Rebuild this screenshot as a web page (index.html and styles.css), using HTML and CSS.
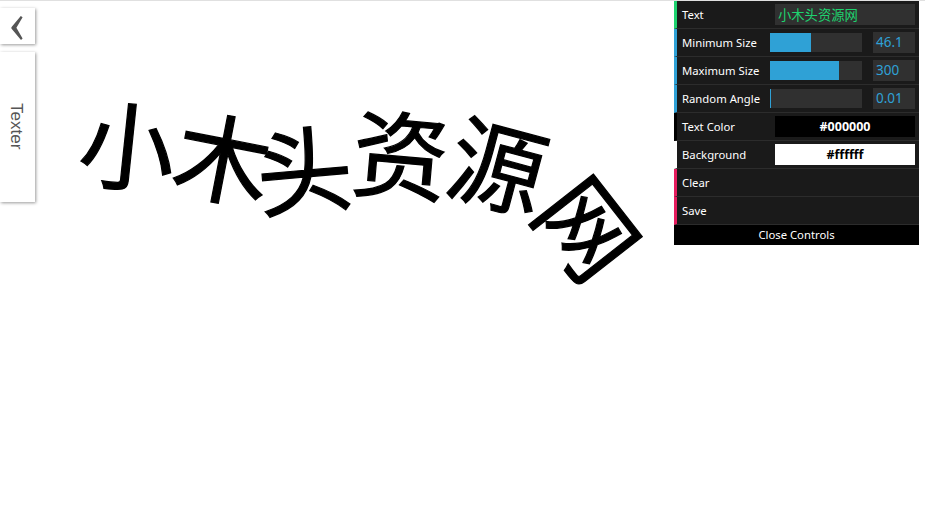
FILE: index.html
```html
<!DOCTYPE html>
<html lang="zh">
<head>
<meta charset="utf-8">
<title>Texter</title>
<link rel="stylesheet" href="styles.css">
</head>
<body>
<div class="side">
  <button class="back" type="button" aria-label="Back">
    <svg class="chev" width="12" height="24" viewBox="0 0 12 24"><path d="M9.8 0 L11.6 1.2 L5.4 11.8 L11.6 22.6 L10 24 L0.4 12.6 L0.4 11.2 Z" fill="#555"/></svg>
  </button>
  <div class="tab"><span class="tab-label">Texter</span></div>
</div>
<div class="canvas">
  <span class="g g1">小</span>
  <span class="g g2">木</span>
  <span class="g g3">头</span>
  <span class="g g4">资</span>
  <span class="g g5">源</span>
  <span class="g g6">网</span>
</div>
<div class="gui">
  <div class="row string">
    <span class="label">Text</span>
    <div class="value text-value">小木头资源网</div>
  </div>
  <div class="row number">
    <span class="label">Minimum Size</span>
    <div class="slider"><div class="fill fill-min"></div></div>
    <div class="num">46.1</div>
  </div>
  <div class="row number">
    <span class="label">Maximum Size</span>
    <div class="slider"><div class="fill fill-max"></div></div>
    <div class="num">300</div>
  </div>
  <div class="row number">
    <span class="label">Random Angle</span>
    <div class="slider"><div class="fill fill-ang"></div></div>
    <div class="num">0.01</div>
  </div>
  <div class="row color-black">
    <span class="label">Text Color</span>
    <div class="value swatch swatch-black">#000000</div>
  </div>
  <div class="row color-white">
    <span class="label">Background</span>
    <div class="value swatch swatch-white">#ffffff</div>
  </div>
  <div class="row action"><span class="label">Clear</span></div>
  <div class="row action"><span class="label">Save</span></div>
  <div class="close">Close Controls</div>
</div>
</body>
</html>
```
FILE: styles.css
```css
html, body { margin: 0; padding: 0; }
body {
  width: 925px;
  height: 516px;
  overflow: hidden;
  background: #fff;
  border-top: 1px solid #e0e0e0;
  box-sizing: border-box;
  position: relative;
  font-family: "Noto Sans", "Open Sans", sans-serif;
}
.side {
  display: flex;
  flex-direction: column;
  gap: 8px;
  width: 35px;
  padding-top: 7px;
}
.back {
  display: flex;
  align-items: center;
  justify-content: center;
  width: 35px;
  height: 36px;
  padding: 0;
  border: 0;
  background: #fff;
  box-shadow: 1px 1px 3px rgba(0,0,0,.4);
}
.chev { margin: 3px 1px 0 0; }
.tab {
  display: flex;
  align-items: center;
  justify-content: center;
  height: 150px;
  background: #fff;
  box-shadow: 1px 1px 3px rgba(0,0,0,.4);
}
.tab-label {
  writing-mode: vertical-rl;
  font-family: "Liberation Sans", Arial, sans-serif;
  font-size: 17px;
  color: #555;
  margin-left: -3px;
  margin-top: -1px;
}
.canvas { position: absolute; inset: 0; overflow: hidden; }
.g {
  position: absolute;
  width: 100px;
  height: 100px;
  line-height: 100px;
  text-align: center;
  font-size: 96px;
  font-weight: 400;
  -webkit-text-stroke: 1.2px #000;
  font-family: "Noto Sans CJK SC", sans-serif;
  color: #000;
}
.g1 { left: 78px;  top: 91px;  transform: rotate(6deg); }
.g2 { left: 174px; top: 104px; transform: rotate(11deg); }
.g3 { left: 254px; top: 115px; transform: rotate(-5deg); }
.g4 { left: 351px; top: 100px; transform: rotate(5deg); }
.g5 { left: 449px; top: 111px; transform: rotate(15deg); }
.g6 { left: 541px; top: 175px; transform: rotate(52deg); }
.gui {
  position: absolute;
  left: 674px;
  top: 0;
  width: 245px;
  background: #1a1a1a;
  color: #fff;
  font-size: 11.3px;
}
.row {
  display: flex;
  align-items: center;
  height: 27px;
  padding: 0 4px 0 5px;
  border-left: 3px solid transparent;
  border-bottom: 1px solid #2c2c2c;
}
.string { border-left-color: #1ed36f; }
.number { border-left-color: #2fa1d6; }
.color-black { border-left-color: #000; }
.color-white { border-left-color: #fff; }
.action { border-left-color: #e61d5f; }
.label { display: block; width: 88px; flex: none; white-space: nowrap; }
.value {
  width: 140px;
  height: 21px;
  line-height: 21px;
  margin-left: 5px;
  box-sizing: border-box;
}
.text-value {
  background: #303030;
  color: #1ed36f;
  padding-left: 3px;
  font-family: "Noto Sans CJK SC", sans-serif;
  font-size: 13.3px;
}
.slider {
  width: 92px;
  height: 19px;
  background: #303030;
  flex: none;
}
.fill { height: 100%; background: #2fa1d6; }
.fill-min { width: 41px; }
.fill-max { width: 69px; }
.fill-ang { width: 1px; }
.num {
  width: 42px;
  height: 21px;
  line-height: 21px;
  margin-left: 11px;
  padding-left: 3px;
  box-sizing: border-box;
  background: #303030;
  color: #2fa1d6;
  font-size: 13.5px;
}
.swatch {
  text-align: center;
  font-weight: 700;
  font-size: 12.5px;
}
.swatch-black { background: #000; color: #fff; }
.swatch-white { background: #fff; color: #000; }
.close {
  height: 20px;
  line-height: 20px;
  text-align: center;
  background: #000;
  color: #fff;
}
```
